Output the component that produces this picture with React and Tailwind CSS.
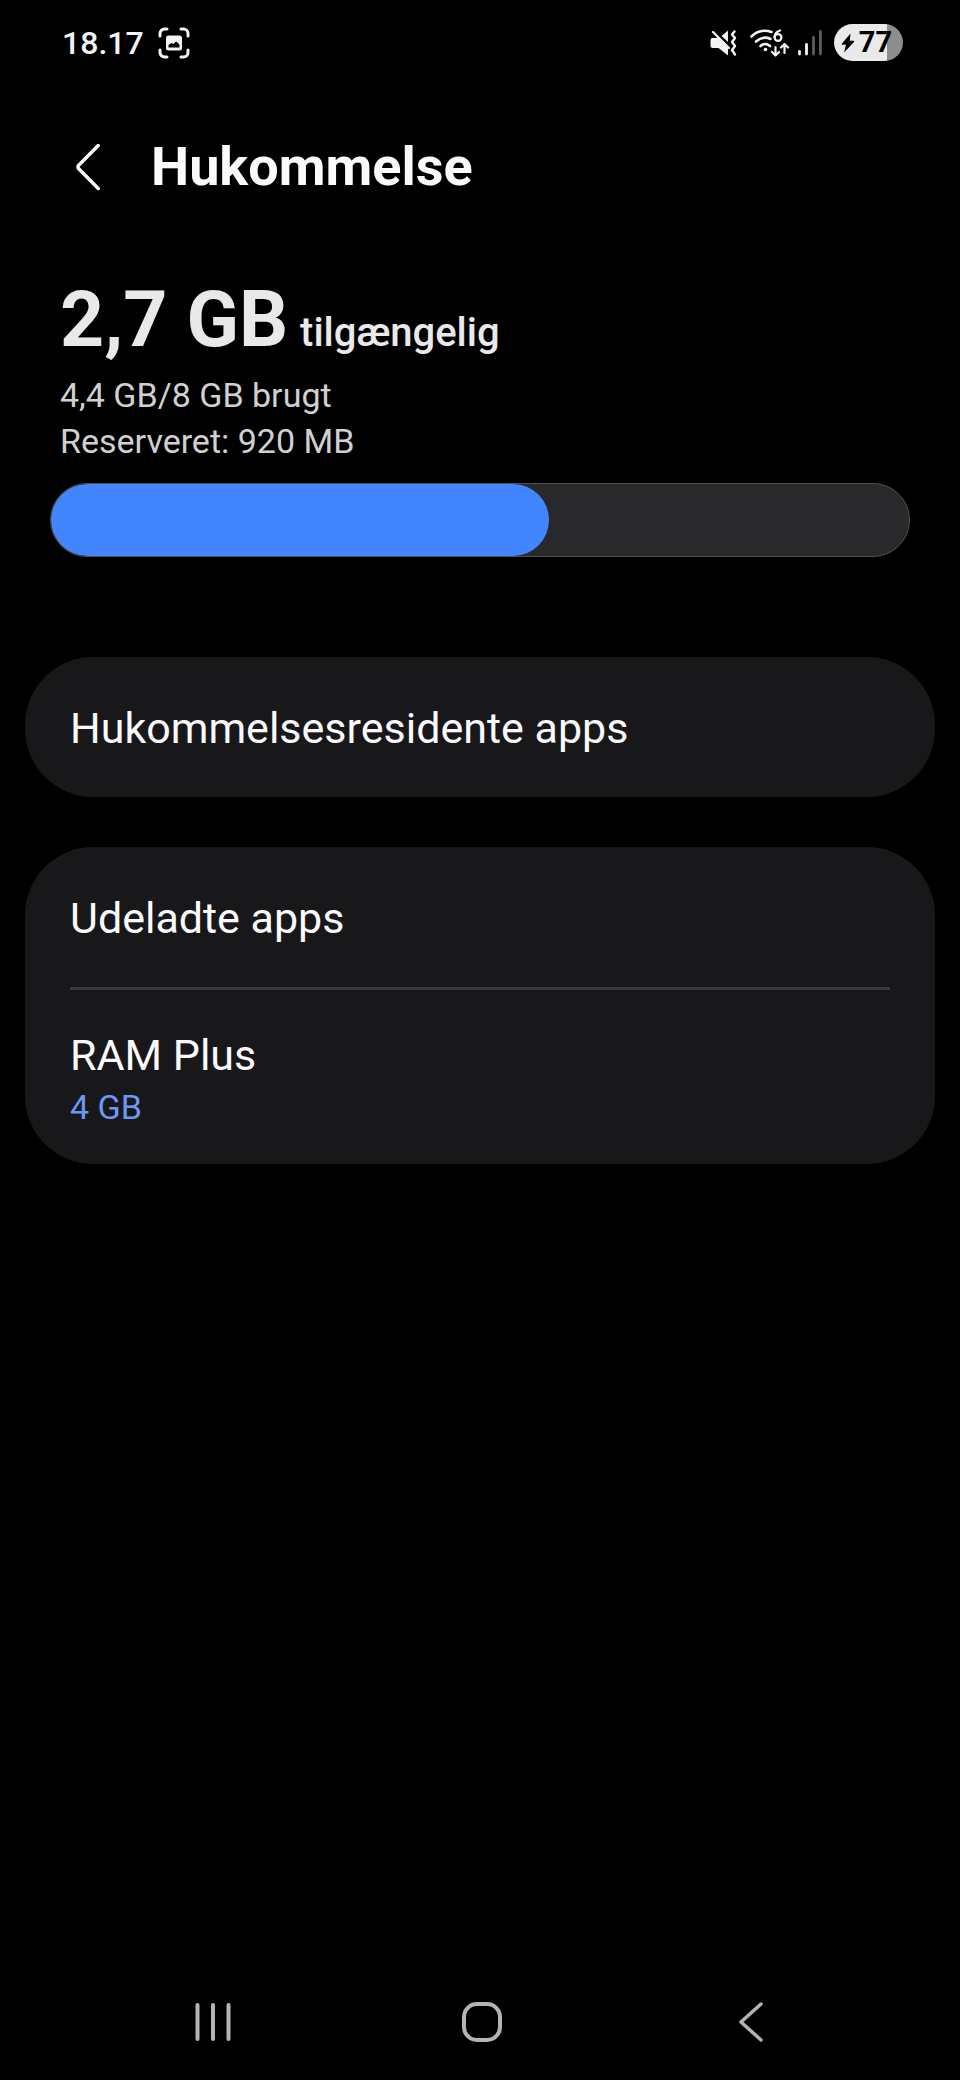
import React from "react";

const MEMORY = {
  available: "2,7 GB",
  used: "4,4 GB/8 GB brugt",
  reserved: "Reserveret: 920 MB",
  percent: 58,
};

const GROUPS = [
  [{ title: "Hukommelsesresidente apps" }],
  [{ title: "Udeladte apps" }, { title: "RAM Plus", value: "4 GB" }],
];

const CaptureIcon = () => (
  <svg className="h-8 w-8" viewBox="0 0 32 32" fill="none">
    <path d="M2 9V6.500A4.500 4.500 0 0 1 6.500 2H9M23 2h2.500A4.500 4.500 0 0 1 30 6.500V9M30 23v2.500a4.500 4.500 0 0 1-4.500 4.500H23M9 30H6.500A4.500 4.500 0 0 1 2 25.500V23" stroke="#f4f4f4" strokeWidth="3" strokeLinecap="round" />
    <rect x="8" y="8.500" width="16" height="15" rx="2.500" fill="#f4f4f4" />
    <path d="M10.500 20.500V18l3-2 2 1 2.500-2.500 2 1.500 1.500 2v2.500z" fill="#000" />
  </svg>
);

const MuteIcon = () => (
  <svg className="h-7 w-7" viewBox="0 0 28 28" fill="none">
    <path d="M1.500 9h5l2-1.500L18 17v9.500L8.500 19H3a2.500 2.500 0 0 1-2.500-2.500V11z" fill="#f4f4f4" />
    <path d="M11.500 7 18 1.500V13z" fill="#f4f4f4" />
    <path d="M3 3l16 16" stroke="#f4f4f4" strokeWidth="2.200" strokeLinecap="round" />
    <path d="M24.500 2.500l-2.500 3 3 3.500-3 4 3 4-3 4 3 4.500" stroke="#f4f4f4" strokeWidth="2.400" strokeLinecap="round" strokeLinejoin="round" />
  </svg>
);

const WifiIcon = () => (
  <svg className="h-7 w-10" viewBox="0 0 40 28" fill="none" stroke="#f4f4f4" strokeLinecap="round">
    <path d="M1.500 7.500C7.500 1.500 15 .8 21.500 3M6 12.500c4.500-4 9.500-4.800 14.500-2.500M10.500 17c3-2.500 6.500-2.500 9.500 0" strokeWidth="2.600" />
    <circle cx="15.500" cy="20.500" r="1.800" fill="#f4f4f4" stroke="none" />
    <path d="M30 1.500c-4 1.500-5.500 4-5.500 6.800" strokeWidth="2.200" />
    <circle cx="28" cy="8.500" r="3.400" strokeWidth="2.200" />
    <path d="M25.500 18v8M22 23l3.500 3.500L29 23M34.500 24v-8.500M31 18.500l3.500-3.500 3.500 3.500" strokeWidth="2.200" strokeLinejoin="round" />
  </svg>
);

const SignalIcon = () => (
  <svg className="h-7 w-6" viewBox="0 0 24 28" strokeWidth="2.800" strokeLinecap="round">
    <path d="M1.500 22.500v2.500M8.500 15.500v9.500" stroke="#f4f4f4" />
    <path d="M15.500 8.500v16.500M22.400 2.500v22.500" stroke="#5c5c5c" />
  </svg>
);

const Battery = () => (
  <div className="flex h-[37px] w-[69px] items-center justify-center gap-1 rounded-full bg-[linear-gradient(90deg,#eaeaea_77%,#8e8e8e_77%)] pr-1 text-[29px] leading-none font-bold text-black">
    <svg className="h-5 w-3.5" viewBox="0 0 14 20">
      <path d="M9.500.5 1 10.500c-.5.800-.2 1.300.6 1.300H5L3 19.500 12.800 9.300c.6-.8.300-1.500-.6-1.500H8.800z" fill="#000" />
    </svg>
    <span>77</span>
  </div>
);

const StatusBar = () => (
  <div className="flex h-[85px] items-center justify-between pr-[57px] pl-[62px]">
    <div className="flex items-center gap-[14px]">
      <span className="text-[32px] leading-none font-medium text-[#f4f4f4]">18.17</span>
      <CaptureIcon />
    </div>
    <div className="flex items-center gap-3">
      <MuteIcon />
      <div className="flex items-center gap-2">
        <WifiIcon />
        <SignalIcon />
      </div>
      <Battery />
    </div>
  </div>
);

const Row = ({ title, value }) => (
  <button type="button" className={`block w-full text-left ${value ? "pt-[37px] pb-[33px]" : "pt-[43px] pb-[41px]"}`}>
    <span className="block text-[43px] leading-[56px] text-[#fafafc]">{title}</span>
    {value && <span className="block text-[34px] leading-[48px] text-[#6c97f5]">{value}</span>}
  </button>
);

const NavBar = () => (
  <nav className="mt-auto mb-[38px] grid h-10 grid-cols-3 pr-[74px] pl-[78px] [&>button]:flex [&>button]:items-center [&>button]:justify-center">
    <button type="button" aria-label="Seneste">
      <svg className="h-10 w-9" viewBox="0 0 36 40" stroke="#b4b4b4" strokeWidth="4" strokeLinecap="round">
        <path d="M2.500 3v34M18 3v34M33.500 3v34" />
      </svg>
    </button>
    <button type="button" aria-label="Hjem">
      <svg className="h-10 w-10" viewBox="0 0 40 40" fill="none" stroke="#b4b4b4" strokeWidth="4">
        <rect x="2" y="2" width="36" height="36" rx="13" />
      </svg>
    </button>
    <button type="button" aria-label="Tilbage">
      <svg className="h-10 w-6" viewBox="0 0 24 40" fill="none" stroke="#b4b4b4" strokeWidth="3.500" strokeLinecap="round" strokeLinejoin="round">
        <path d="M22 2 2 20l20 18" />
      </svg>
    </button>
  </nav>
);

const App = () => {
  return (
    <div className="flex min-h-screen flex-col bg-black font-['Roboto',sans-serif]">
      <StatusBar />

      <header className="flex h-[164px] items-center gap-[51px] pl-[76px]">
        <button type="button" aria-label="Tilbage">
          <svg className="h-12 w-6" viewBox="0 0 24 48" fill="none" stroke="#fafafa" strokeWidth="3.500" strokeLinecap="round" strokeLinejoin="round">
            <path d="M22.200 2.500 2.500 22.500q-1 1.500 0 3L22.200 45.500" />
          </svg>
        </button>
        <h1 className="text-[54px] leading-[64px] font-bold text-[#fafafc]">Hukommelse</h1>
      </header>

      <section className="px-[50px] pt-[31px]">
        <div className="px-[10px]">
          <p className="flex items-baseline gap-3 text-[77px] leading-[80px] font-bold text-[#e9e9e9]">
            {MEMORY.available}
            <span className="text-[40px] leading-none font-medium">tilgængelig</span>
          </p>
          <p className="mt-3 text-[34px] leading-[46px] text-[#d0d0d0]">
            {MEMORY.used}
            <br />
            {MEMORY.reserved}
          </p>
        </div>
        <div role="progressbar" aria-label="Hukommelse" aria-valuenow={MEMORY.percent} className="mt-[19px] h-[74px] overflow-hidden rounded-full border border-[#505052] bg-[#29292b]">
          <div className="h-full rounded-full bg-[#4285ff]" style={{ width: `${MEMORY.percent}%` }} />
        </div>
      </section>

      <main className="mt-[100px] flex flex-col gap-[50px] px-[25px]">
        {GROUPS.map((rows, index) => (
          <div key={index} className="divide-y-3 divide-[#39393b] rounded-[68px] bg-[#18181a] px-[45px]">
            {rows.map((row) => (
              <Row key={row.title} {...row} />
            ))}
          </div>
        ))}
      </main>

      <NavBar />
    </div>
  );
};

export default App;
